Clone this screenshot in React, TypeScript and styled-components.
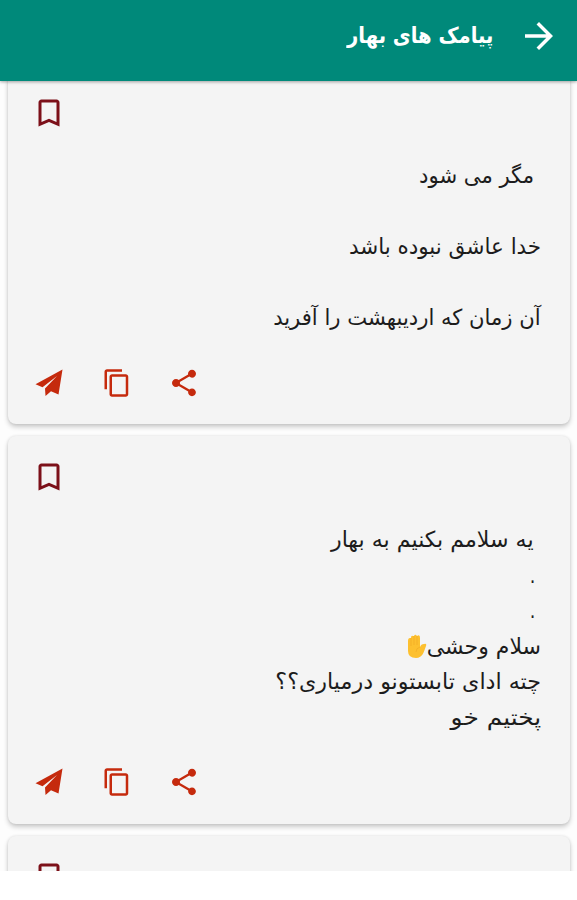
import React from 'react';
import styled, { createGlobalStyle } from 'styled-components';

const GlobalStyle = createGlobalStyle`
  * { box-sizing: border-box; }
  body { margin: 0; background: #fff; overflow: hidden; }
`;

const Screen = styled.main`
  width: 577px;
  height: 871px;
  display: flex;
  flex-direction: column;
  overflow: hidden;
  background: #fdfdfd;
  font-family: 'DejaVu Sans', sans-serif;
`;

const Toolbar = styled.header`
  height: 81px;
  flex: none;
  display: flex;
  align-items: flex-start;
  gap: 25px;
  padding: 15px 17px 0;
  direction: rtl;
  color: #fff;
  background: #00897a;
  box-shadow: 0 1px 3px rgba(0, 0, 0, 0.35);
  z-index: 1;
`;

const Title = styled.h1`
  margin: 0;
  font-size: 22px;
  line-height: 41px;
  font-weight: 700;
  white-space: pre;
`;

const Feed = styled.div`
  margin-top: -9px;
  padding: 0 7px 0 8px;
  display: flex;
  flex-direction: column;
  gap: 12px;
`;

const Card = styled.article`
  flex: none;
  display: flex;
  flex-direction: column;
  padding: 23px 29px 0 23px;
  height: 352px;
  border-radius: 8px;
  background: #f4f4f4;
  box-shadow: 0 3px 5px rgba(0, 0, 0, 0.2), 0 0 3px rgba(0, 0, 0, 0.1);
  & + & { height: 388px; }
`;

const Save = styled.div`
  height: 63px;
  color: #7c1019;
`;

const Message = styled.div`
  direction: rtl;
  color: #1c1c1c;
`;

const Line = styled.p`
  margin: 0;
  height: 35.5px;
  line-height: 35.5px;
  font-size: 22px;
  white-space: pre;
`;

const Fit = styled.span<{ $scale?: number }>`
  display: inline-block;
  transform-origin: right center;
  transform: scaleX(${p => p.$scale ?? 1});
`;

const Actions = styled.div`
  display: flex;
  align-items: center;
  height: 32px;
  margin: 31px 0 0 4px;
  color: #c52a0d;
`;

const Action = styled.span<{ $gap?: number }>`
  display: flex;
  margin-left: ${p => p.$gap ?? 0}px;
`;

const Glyph = styled.svg<{ $size: number }>`
  width: ${p => p.$size}px;
  height: ${p => p.$size}px;
  display: block;
  flex: none;
  fill: currentColor;
`;

const Hand = styled.svg`
  display: inline-block;
  width: 20px;
  height: 25px;
  vertical-align: -5px;
`;

const RaisedHand = () => (
  <Hand viewBox="0 0 20 25">
    <path fill="#fdc02f" d="M1 7Q1 4 3 4L4 4Q4 1 6 2L7 2Q8-.5 10 2Q13 0 13 4L13 13Q14 10 17 10Q20 9 19 12C17 17 16 24 9 24Q1 24 1 17Z" />
    <path fill="none" stroke="#f0aa26" strokeWidth=".7" d="M4 4v8M7 2v9M10 2v9M13 13q-4 1-4 5" />
  </Hand>
);

const Bookmark = () => (
  <Glyph $size={36} viewBox="0 0 24 24">
    <path d="M17 3H7c-1.1 0-1.99.9-1.99 2L5 21l7-3 7 3V5c0-1.1-.9-2-2-2zm0 15-5-2.18L7 18V5h10v13z" />
  </Glyph>
);

interface Entry { text: string; scale?: number; hand?: boolean }

const messages: Entry[][] = [
  [
    { text: ' مگر می شود', scale: 0.96 },
    { text: '' },
    { text: 'خدا عاشق نبوده باشد', scale: 0.975 },
    { text: '' },
    { text: 'آن زمان که اردیبهشت را آفرید', scale: 0.96 },
  ],
  [
    { text: ' یه سلامم بکنیم به بهار', scale: 1.005 },
    { text: ' .', scale: 0.8 },
    { text: ' .', scale: 0.8 },
    { text: 'سلام وحشی', hand: true },
    { text: 'چته ادای تابستونو درمیاری؟؟', scale: 1.01 },
    { text: 'پختیم خو', scale: 1.13 },
  ],
  [],
];

const MessageCard = ({ lines }: { lines: Entry[] }) => (
  <Card>
    <Save><Bookmark /></Save>
    <Message>
      {lines.map((line, i) => (
        <Line key={i}>
          <Fit $scale={line.scale}>{line.text}</Fit>
          {line.hand && <RaisedHand />}
        </Line>
      ))}
    </Message>
    <Actions>
      <Action>
        <Glyph $size={28} viewBox="0 0 28 28">
          <path d="M27.500.5 23.500 25.500 16 22.300 10.500 27 10 19.500 22 7 7.500 18.300.5 15.200Z" />
        </Glyph>
      </Action>
      <Action $gap={38.5}>
        <Glyph $size={30} viewBox="0 0 24 24">
          <path d="M16 1H4c-1.100 0-2 .9-2 2v14h2V3h12V1zm3 4H8c-1.100 0-2 .9-2 2v14c0 1.100.9 2 2 2h11c1.100 0 2-.9 2-2V7c0-1.100-.9-2-2-2zm0 16H8V7h11v14z" />
        </Glyph>
      </Action>
      <Action $gap={36.5}>
        <Glyph $size={32} viewBox="0 0 24 24">
          <path d="M18 16.080c-.76 0-1.440.3-1.960.77L8.910 12.700c.05-.23.09-.46.09-.7s-.04-.47-.09-.7l7.050-4.110c.54.5 1.250.81 2.040.81 1.660 0 3-1.340 3-3s-1.340-3-3-3-3 1.340-3 3c0 .24.04.47.09.7L8.040 9.810C7.500 9.310 6.790 9 6 9c-1.660 0-3 1.340-3 3s1.340 3 3 3c.79 0 1.500-.31 2.040-.81l7.120 4.160c-.05.21-.08.43-.08.65 0 1.610 1.310 2.920 2.920 2.920s2.920-1.310 2.920-2.920-1.310-2.920-2.920-2.920z" />
        </Glyph>
      </Action>
    </Actions>
  </Card>
);

export default function App() {
  return (
    <>
      <GlobalStyle />
      <Screen>
        <Toolbar>
          <Glyph $size={42} viewBox="0 0 24 24">
            <path d="m12 4-1.410 1.410L16.170 11H4v2h12.170l-5.580 5.590L12 20l8-8z" />
          </Glyph>
          <Title><Fit $scale={0.89}>پیامک های بهار</Fit></Title>
        </Toolbar>
        <Feed>
          {messages.map((lines, i) => <MessageCard key={i} lines={lines} />)}
        </Feed>
      </Screen>
    </>
  );
}
